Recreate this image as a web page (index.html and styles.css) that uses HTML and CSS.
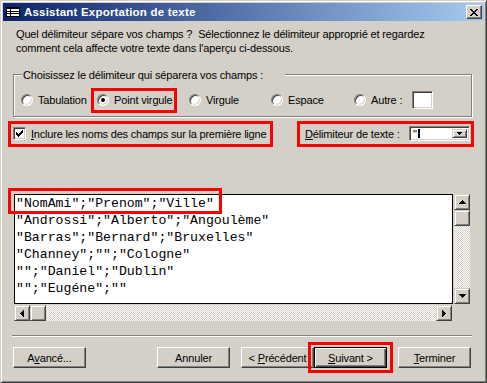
FILE: index.html
```html
<!DOCTYPE html>
<html lang="fr">
<head>
<meta charset="utf-8">
<title>Assistant Exportation de texte</title>
<link rel="stylesheet" href="styles.css">
</head>
<body>
<div class="window">
  <div class="titlebar">
    <svg class="app-icon" width="16" height="16" viewBox="0 0 16 16" shape-rendering="crispEdges">
      <rect x="1.5" y="3.5" width="13" height="9" fill="#fff" stroke="#000"/>
      <rect x="1" y="3" width="14" height="2" fill="#000"/>
      <path d="M2 7.5h12M2 9.5h12M5.5 5v7" stroke="#000" fill="none"/>
    </svg>
    <span class="title">Assistant Exportation de texte</span>
    <span class="close-btn">
      <svg width="8" height="7" viewBox="0 0 8 7" shape-rendering="crispEdges"><path d="M0 0h2v1H0zM6 0h2v1H6zM1 1h2v1H1zM5 1h2v1H5zM2 2h4v1H2zM3 3h2v1H3zM2 4h4v1H2zM1 5h2v1H1zM5 5h2v1H5zM0 6h2v1H0zM6 6h2v1H6z" fill="#000"/></svg>
    </span>
  </div>

  <div class="content">
    <p class="intro">Quel délimiteur sépare vos champs ?&nbsp; Sélectionnez le délimiteur approprié et regardez<br>comment cela affecte votre texte dans l'aperçu ci-dessous.</p>

    <div class="group">
      <span class="legend">Choisissez le délimiteur qui séparera vos champs :</span>
      <div class="options">
        <div class="opt"><span class="radio"></span><span class="opt-label">Tabulation</span></div>
        <div class="opt"><span class="radio"><span class="dot"></span></span><span class="opt-label">Point virgule</span></div>
        <div class="opt"><span class="radio"></span><span class="opt-label">Virgule</span></div>
        <div class="opt"><span class="radio"></span><span class="opt-label">Espace</span></div>
        <div class="opt"><span class="radio"></span><span class="opt-label">Autre :</span><span class="field other-field"></span></div>
      </div>
    </div>

    <div class="row2">
      <div class="check-opt">
        <span class="checkbox"><svg width="7" height="7" viewBox="0 0 7 7" shape-rendering="crispEdges"><path d="M6 0h1v1H6zM5 1h2v1H5zM0 2h1v1H0zM4 2h3v1H4zM0 3h2v1H0zM3 3h3v1H3zM0 4h5v1H0zM1 5h3v1H1zM2 6h1v1H2z" fill="#000"/></svg></span>
        <span class="check-label"><u>I</u>nclure les noms des champs sur la première ligne</span>
      </div>
      <div class="qualifier">
        <span><u>D</u>élimiteur de texte :</span>
        <span class="field combo">
          <span class="combo-text">"</span><span class="caret"></span>
          <span class="combo-btn"><svg width="5" height="3" viewBox="0 0 5 3" shape-rendering="crispEdges"><path d="M0 0h5v1H0zM1 1h3v1H1zM2 2h1v1H2z" fill="#000"/></svg></span>
        </span>
      </div>
    </div>

    <div class="preview-wrap">
      <div class="preview-row">
        <div class="preview">
          <div class="line">"NomAmi";"Prenom";"Ville"</div>
          <div class="line">"Androssi";"Alberto";"Angoulème"</div>
          <div class="line">"Barras";"Bernard";"Bruxelles"</div>
          <div class="line">"Channey";"";"Cologne"</div>
          <div class="line">"";"Daniel";"Dublin"</div>
          <div class="line">"";"Eugéne";""</div>
        </div>
        <div class="vscroll">
          <span class="sbtn"><svg width="7" height="4" viewBox="0 0 7 4" shape-rendering="crispEdges"><path d="M3 0h1v1H3zM2 1h3v1H2zM1 2h5v1H1zM0 3h7v1H0z" fill="#000"/></svg></span>
          <span class="sbtn"></span>
          <span class="track"></span>
          <span class="sbtn"><svg width="7" height="4" viewBox="0 0 7 4" shape-rendering="crispEdges"><path d="M0 0h7v1H0zM1 1h5v1H1zM2 2h3v1H2zM3 3h1v1H3z" fill="#000"/></svg></span>
        </div>
      </div>
      <div class="hscroll-row">
        <div class="hscroll">
          <span class="sbtn"><svg width="4" height="7" viewBox="0 0 4 7" shape-rendering="crispEdges"><path d="M3 0h1v7H3zM2 1h1v5H2zM1 2h1v3H1zM0 3h1v1H0z" fill="#000"/></svg></span>
          <span class="sbtn"></span>
          <span class="track"></span>
          <span class="sbtn"><svg width="4" height="7" viewBox="0 0 4 7" shape-rendering="crispEdges"><path d="M0 0h1v7H0zM1 1h1v5H1zM2 2h1v3H2zM3 3h1v1H3z" fill="#000"/></svg></span>
        </div>
      </div>
    </div>

    <div class="separator"></div>

    <div class="buttons">
      <span class="btn btn-advanced"><span>A<u>v</u>ancé...</span></span>
      <span class="btn btn-cancel"><span>Annuler</span></span>
      <span class="btn btn-back"><span>&lt; <u>P</u>récédent</span></span>
      <span class="btn btn-default"><span><u>S</u>uivant &gt;</span></span>
      <span class="btn btn-finish"><span><u>T</u>erminer</span></span>
    </div>
  </div>

  <span class="hl hl-point"></span>
  <span class="hl hl-check"></span>
  <span class="hl hl-qualifier"></span>
  <span class="hl hl-line"></span>
  <span class="hl hl-next"></span>
</div>
</body>
</html>
```

FILE: styles.css
```css
html, body {
  margin: 0;
  padding: 0;
  background: #d4d0c8;
}

body {
  font-family: "Liberation Sans", Arial, sans-serif;
  font-size: 11px;
  letter-spacing: -0.15px;
  color: #000;
}

.window {
  position: relative;
  width: 487px;
  height: 383px;
  box-sizing: border-box;
  border: 1px solid;
  border-color: #d4d0c8 #404040 #404040 #d4d0c8;
  box-shadow: inset 1px 1px #fff, inset -1px -1px #808080;
  padding: 2px;
  background: #d4d0c8;
}

/* ---------- title bar ---------- */
.titlebar {
  height: 18px;
  display: flex;
  align-items: center;
  background: linear-gradient(to right, #0a246a, #a6caf0);
  color: #fff;
}

.app-icon {
  margin-left: 2px;
  flex: none;
}

.title {
  margin-left: 3px;
  font-weight: bold;
  font-size: 11.5px;
  letter-spacing: 0.2px;
  line-height: 14px;
}

.close-btn {
  margin-left: auto;
  margin-right: 2px;
  width: 16px;
  height: 14px;
  box-sizing: border-box;
  border: 1px solid;
  border-color: #fff #404040 #404040 #fff;
  box-shadow: inset -1px -1px #808080;
  background: #d4d0c8;
  display: flex;
  align-items: center;
  justify-content: center;
}

/* ---------- content ---------- */
.content {
  display: flex;
  flex-direction: column;
}

.intro {
  margin: 6px 0 0 13px;
  line-height: 14px;
}

.group {
  margin: 19px 12px 0 10px;
  border: 1px solid #808080;
  box-shadow: inset 1px 1px #fff, 1px 1px #fff;
  padding-bottom: 7px;
}

.legend {
  display: block;
  width: 263px;
  box-sizing: border-box;
  margin: -7px 0 0 8px;
  padding-left: 1px;
  line-height: 14px;
  background: #d4d0c8;
}

.options {
  margin-top: 9px;
  padding-left: 7px;
  height: 18px;
  display: grid;
  grid-template-columns: 76px 92px 82px 83px 79px;
}

.opt {
  display: flex;
  align-items: center;
}

.opt-label {
  margin-left: 5px;
  line-height: 14px;
}

.radio {
  width: 12px;
  height: 12px;
  flex: none;
  box-sizing: border-box;
  border-radius: 50%;
  border: 1px solid;
  border-color: #808080 #fff #fff #808080;
  box-shadow: inset 1px 1px #404040, inset -1px -1px #d4d0c8;
  background: #fff;
  display: flex;
  align-items: center;
  justify-content: center;
}

.dot {
  width: 4px;
  height: 4px;
  border-radius: 50%;
  background: #000;
}

.field {
  box-sizing: border-box;
  border: 1px solid;
  border-color: #808080 #fff #fff #808080;
  box-shadow: inset 1px 1px #404040, inset -1px -1px #d4d0c8;
  background: #fff;
}

.other-field {
  margin-left: auto;
  width: 21px;
  height: 18px;
}

/* ---------- checkbox / qualifier row ---------- */
.row2 {
  margin-top: 9px;
  padding: 0 14px 0 10px;
  height: 15px;
  display: flex;
  align-items: center;
}

.check-opt {
  display: flex;
  align-items: center;
}

.checkbox {
  width: 13px;
  height: 13px;
  box-sizing: border-box;
  border: 1px solid;
  border-color: #808080 #fff #fff #808080;
  box-shadow: inset 1px 1px #404040, inset -1px -1px #d4d0c8;
  background: #fff;
  display: flex;
  align-items: center;
  justify-content: center;
}

.check-label {
  margin-left: 5px;
  line-height: 14px;
  letter-spacing: -0.2px;
}

.qualifier {
  margin-left: auto;
  width: 165px;
  display: flex;
  align-items: center;
  line-height: 14px;
}

.combo {
  margin-left: auto;
  width: 61px;
  height: 15px;
  display: flex;
  align-items: stretch;
  padding: 2px;
}

.combo-text {
  font-size: 11px;
  line-height: 11px;
  margin-left: 1px;
}

.caret {
  width: 2px;
  background: #000;
  margin-left: 1px;
}

.combo-btn {
  margin-left: auto;
  width: 15px;
  box-sizing: border-box;
  border: 1px solid;
  border-color: #d4d0c8 #404040 #404040 #d4d0c8;
  box-shadow: inset 1px 1px #fff, inset -1px -1px #808080;
  background: #d4d0c8;
  display: flex;
  align-items: center;
  justify-content: center;
}

/* ---------- preview ---------- */
.preview-wrap {
  margin: 53px 0 0 11px;
  width: 456px;
}

.preview-row {
  display: flex;
  height: 110px;
}

.preview {
  width: 439px;
  box-sizing: border-box;
  border: 1px solid #000;
  background: #fff;
  overflow: hidden;
  padding-left: 1px;
  font-family: "Liberation Mono", "Courier New", monospace;
  font-size: 13.2px;
  letter-spacing: 0;
  line-height: 17px;
}

.line {
  white-space: pre;
}

.vscroll {
  margin-left: 1px;
  width: 16px;
  display: flex;
  flex-direction: column;
}

.hscroll-row {
  margin-top: 1px;
  display: flex;
}

.hscroll {
  width: 438px;
  height: 16px;
  display: flex;
}

.sbtn {
  width: 16px;
  height: 16px;
  flex: none;
  box-sizing: border-box;
  border: 1px solid;
  border-color: #d4d0c8 #404040 #404040 #d4d0c8;
  box-shadow: inset 1px 1px #fff, inset -1px -1px #808080;
  background: #d4d0c8;
  display: flex;
  align-items: center;
  justify-content: center;
}

.track {
  flex: 1;
  background: repeating-conic-gradient(#fff 0 25%, #d4d0c8 0 50%) 0 0 / 2px 2px;
}

/* ---------- separator + buttons ---------- */
.separator {
  margin: 14px 12px 0 9px;
  border-top: 1px solid #808080;
  border-bottom: 1px solid #fff;
}

.buttons {
  margin-top: 10px;
  padding-left: 10px;
  display: flex;
}

.btn {
  width: 73px;
  height: 21px;
  box-sizing: border-box;
  border: 1px solid;
  border-color: #fff #404040 #404040 #fff;
  box-shadow: inset -1px -1px #808080;
  background: #d4d0c8;
  display: flex;
  align-items: center;
  justify-content: center;
  line-height: 14px;
  white-space: nowrap;
}

.btn-cancel { margin-left: 71px; }
.btn-back { margin-left: 11px; }
.btn-finish { margin-left: 11px; }

.btn-default {
  border: 1px solid #000;
  box-shadow: inset 1px 1px #fff, inset -1px -1px #404040, inset -2px -2px #808080;
}

/* ---------- red annotation boxes ---------- */
.hl {
  position: absolute;
  box-sizing: border-box;
  border: 3px solid #ff0000;
}

.hl-point { left: 90px; top: 87px; width: 86px; height: 25px; }
.hl-check { left: 7px; top: 120px; width: 265px; height: 26px; }
.hl-qualifier { left: 296px; top: 120px; width: 177px; height: 26px; }
.hl-line { left: 7px; top: 187px; width: 214px; height: 26px; }
.hl-next { left: 307px; top: 341px; width: 85px; height: 31px; }
```
